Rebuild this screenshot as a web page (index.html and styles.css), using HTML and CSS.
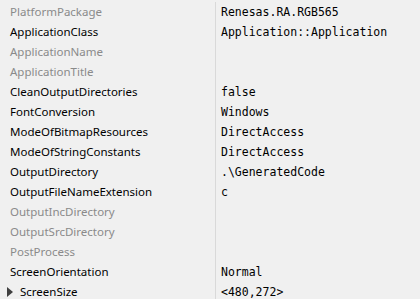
FILE: index.html
```html
<!DOCTYPE html>
<html lang="en">
<head>
    <meta charset="UTF-8">
    <title>Properties</title>
    <link rel="stylesheet" href="styles.css">
</head>
<body>
    <div class="grid">
        <div class="row"><span class="name dim">PlatformPackage</span><span class="value">Renesas.RA.RGB565</span></div>
        <div class="row"><span class="name">ApplicationClass</span><span class="value">Application::Application</span></div>
        <div class="row"><span class="name dim">ApplicationName</span><span class="value"></span></div>
        <div class="row"><span class="name dim">ApplicationTitle</span><span class="value"></span></div>
        <div class="row"><span class="name">CleanOutputDirectories</span><span class="value">false</span></div>
        <div class="row"><span class="name">FontConversion</span><span class="value">Windows</span></div>
        <div class="row"><span class="name">ModeOfBitmapResources</span><span class="value">DirectAccess</span></div>
        <div class="row"><span class="name">ModeOfStringConstants</span><span class="value">DirectAccess</span></div>
        <div class="row"><span class="name">OutputDirectory</span><span class="value">.\GeneratedCode</span></div>
        <div class="row"><span class="name">OutputFileNameExtension</span><span class="value">c</span></div>
        <div class="row"><span class="name dim">OutputIncDirectory</span><span class="value"></span></div>
        <div class="row"><span class="name dim">OutputSrcDirectory</span><span class="value"></span></div>
        <div class="row"><span class="name dim">PostProcess</span><span class="value"></span></div>
        <div class="row"><span class="name">ScreenOrientation</span><span class="value">Normal</span></div>
        <div class="row"><span class="name group"><span class="arrow"></span>ScreenSize</span><span class="value">&lt;480,272&gt;</span></div>
    </div>
</body>
</html>
```

FILE: styles.css
```css
body {
    margin: 0;
    padding-top: 2px;
    background-color: #f0f0f0;
    overflow: hidden;
}
.grid {
    display: flex;
    flex-direction: column;
}
.row {
    display: grid;
    grid-template-columns: 215px 1fr;
    height: 20px;
    align-items: center;
}
.name {
    font-family: "Noto Sans", sans-serif;
    font-size: 11.5px;
    color: #000;
    padding-left: 10px;
    height: 20px;
    line-height: 20px;
    display: flex;
    align-items: center;
}
.name.dim {
    color: #8a8a8a;
}
.name.group {
    padding-left: 7px;
}
.arrow {
    width: 0;
    height: 0;
    border-top: 5px solid transparent;
    border-bottom: 5px solid transparent;
    border-left: 6px solid #404040;
    margin-right: 7px;
}
.value {
    font-family: "DejaVu Sans Mono", monospace;
    font-size: 11.5px;
    color: #000;
    border-left: 1px solid #d9d9d9;
    padding-left: 5px;
    height: 20px;
    line-height: 20px;
}
```
